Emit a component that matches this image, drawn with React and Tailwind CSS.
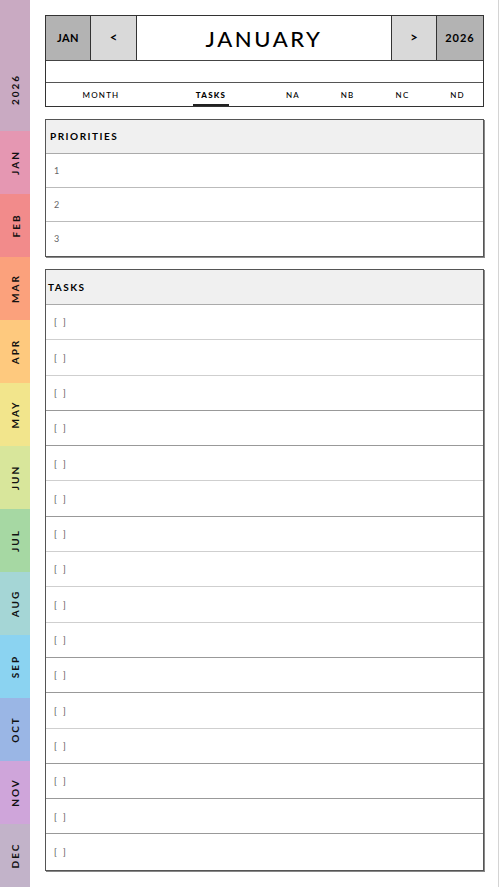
import * as React from 'react'

const months = [
  { label: 'JAN', bg: 'bg-[#e597b2]' },
  { label: 'FEB', bg: 'bg-[#f28b8b]' },
  { label: 'MAR', bg: 'bg-[#fba17c]' },
  { label: 'APR', bg: 'bg-[#fec97e]' },
  { label: 'MAY', bg: 'bg-[#f2e58c]' },
  { label: 'JUN', bg: 'bg-[#d8e69b]' },
  { label: 'JUL', bg: 'bg-[#a6d8a3]' },
  { label: 'AUG', bg: 'bg-[#a5d6d6]' },
  { label: 'SEP', bg: 'bg-[#8bd3f1]' },
  { label: 'OCT', bg: 'bg-[#9ab6e5]' },
  { label: 'NOV', bg: 'bg-[#cfa5da]' },
  { label: 'DEC', bg: 'bg-[#c2b3c9]' },
]

const tabs = ['MONTH', 'TASKS', 'NA', 'NB', 'NC', 'ND']

// darker rule under these task rows
const darkRows = [2, 3, 5, 9, 10, 12, 13, 14, 15]

const SideLabel = ({ children }) => (
  <span className="-rotate-90 whitespace-nowrap text-[10px] font-bold tracking-[2px] text-[#111]">
    {children}
  </span>
)

const App = () => (
  <div className="flex h-[887px] w-[500px] overflow-hidden bg-white font-['Lato',sans-serif] text-black">
    <div className="flex w-[30px] shrink-0 flex-col">
      <div className="flex h-[131px] items-end justify-center bg-[#c9aac2] pb-[34px] pl-px">
        <SideLabel>2026</SideLabel>
      </div>
      {months.map((m) => (
        <div key={m.label} className={`flex h-[63px] items-center justify-center pl-px ${m.bg}`}>
          <SideLabel>{m.label}</SideLabel>
        </div>
      ))}
    </div>

    <div className="mr-px flex flex-1 flex-col border-r border-[#d4d4d4] pl-[15px] pr-[13px] pt-[15px]">
      <div className="w-[439px] border border-[#333]">
        <div className="flex h-[45px] border-b border-[#444]">
          <div className="flex w-[45px] items-center justify-center border-r border-[#333] bg-[#b3b3b3] text-[11px] font-bold tracking-[0.5px]">
            JAN
          </div>
          <div className="flex w-[46px] items-center justify-center border-r border-[#333] bg-[#d9d9d9] text-[13px] font-bold">
            &lt;
          </div>
          <div className="flex flex-1 items-center justify-center text-[22px] font-medium tracking-[2.6px]">
            JANUARY
          </div>
          <div className="flex w-[46px] items-center justify-center border-l border-r border-[#333] bg-[#d9d9d9] text-[13px] font-bold">
            &gt;
          </div>
          <div className="flex w-[46px] items-center justify-center bg-[#b3b3b3] text-[11px] font-bold tracking-[1px]">
            2026
          </div>
        </div>
        <div className="h-[22px] border-b border-[#555]" />
        <div className="grid h-[23px] grid-cols-[110px_110px_54px_55px_55px_55px]">
          {tabs.map((t) => (
            <div key={t} className="relative flex items-center justify-center">
              <span
                className={`text-[8px] tracking-[1.2px] ${t === 'TASKS' ? 'font-black' : 'font-medium'}`}
              >
                {t}
              </span>
              {t === 'TASKS' && (
                <div className="absolute bottom-0 left-1/2 h-[2px] w-[36px] -translate-x-1/2 bg-[#222]" />
              )}
            </div>
          ))}
        </div>
      </div>

      <div className="mt-[12px] w-[439px] border border-[#555] shadow-[1px_1px_0_#888]">
        <div className="flex h-[34px] items-center border-b border-[#aaa] bg-[#f0f0f0] pl-[4px] text-[10px] font-bold tracking-[1.5px]">
          PRIORITIES
        </div>
        {['1', '2', '3'].map((n, i) => (
          <div
            key={n}
            className={`flex h-[34px] items-center pl-[8px] text-[9px] text-[#666] ${i < 2 ? 'border-b border-[#bbb]' : ''}`}
          >
            {n}
          </div>
        ))}
      </div>

      <div className="mt-[12px] w-[439px] border border-[#555] shadow-[1px_1px_0_#888]">
        <div className="flex h-[35px] items-center border-b border-[#aaa] bg-[#f0f0f0] pl-[2px] text-[10px] font-bold tracking-[1.5px]">
          TASKS
        </div>
        {Array.from({ length: 16 }).map((_, i) => (
          <div
            key={i}
            className={`flex h-[35.3px] items-center pl-[8px] text-[9px] tracking-[2px] text-[#555] ${
              i < 15 ? (darkRows.includes(i) ? 'border-b border-[#999]' : 'border-b border-[#cfcfcf]') : ''
            }`}
          >
            [ ]
          </div>
        ))}
      </div>
    </div>
  </div>
)

export default App
